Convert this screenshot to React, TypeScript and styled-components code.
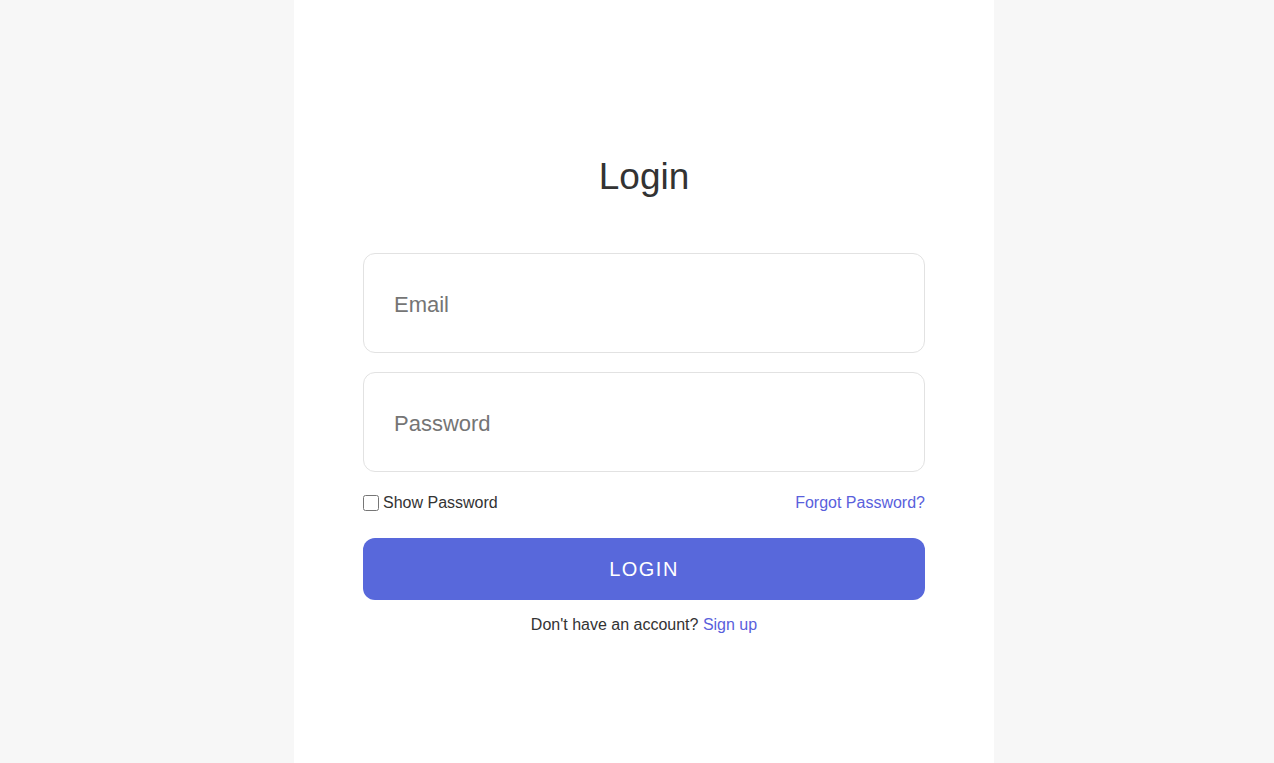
import React, { useState } from "react";
import styled, { createGlobalStyle } from "styled-components";

const GlobalStyle = createGlobalStyle`
  html, body {
    margin: 0;
    padding: 0;
    height: 100%;
    background: #f7f7f7;
    font-family: "Liberation Sans", Arial, sans-serif;
  }
  #root {
    height: 100%;
  }
`;

const Page = styled.div`
  display: flex;
  justify-content: center;
  min-height: 100vh;
  padding-left: 14px;
`;

const Panel = styled.div`
  width: 700px;
  background: #ffffff;
  display: flex;
  flex-direction: column;
  align-items: center;
  padding-top: 154px;
  box-sizing: border-box;
`;

const Title = styled.h1`
  margin: 0 0 53px;
  font-size: 37px;
  font-weight: 400;
  line-height: 46px;
  color: #333333;
`;

const Form = styled.form`
  width: 562px;
  display: flex;
  flex-direction: column;
`;

const Input = styled.input`
  box-sizing: border-box;
  height: 100px;
  width: 100%;
  margin-bottom: 19px;
  padding: 3px 30px 0;
  border: 1px solid #e2e2e2;
  border-radius: 12px;
  font-family: inherit;
  font-size: 22px;
  color: #333333;
  outline: none;

  &::placeholder {
    color: #757575;
  }
`;

const OptionsRow = styled.div`
  display: flex;
  justify-content: space-between;
  align-items: center;
  margin-top: 3px;
  margin-bottom: 26px;
  font-size: 16px;
`;

const CheckLabel = styled.label`
  display: flex;
  align-items: center;
  color: #333333;
  cursor: pointer;

  input {
    margin: 0 4px 0 0;
    width: 16px;
    height: 16px;
  }
`;

const Link = styled.a`
  color: #5a5fdc;
  text-decoration: none;
  cursor: pointer;
`;

const Button = styled.button`
  height: 62px;
  border: none;
  border-radius: 12px;
  background: #5868db;
  color: #ffffff;
  font-family: inherit;
  font-size: 20px;
  letter-spacing: 1.5px;
  cursor: pointer;
`;

const Footer = styled.p`
  margin: 16px 0 0;
  text-align: center;
  font-size: 16px;
  color: #333333;
`;

export default function App() {
  const [show, setShow] = useState(false);
  return (
    <>
      <GlobalStyle />
      <Page>
        <Panel>
          <Title>Login</Title>
          <Form onSubmit={(e) => e.preventDefault()}>
            <Input type="email" placeholder="Email" />
            <Input type={show ? "text" : "password"} placeholder="Password" />
            <OptionsRow>
              <CheckLabel>
                <input
                  type="checkbox"
                  checked={show}
                  onChange={() => setShow(!show)}
                />
                Show Password
              </CheckLabel>
              <Link>Forgot Password?</Link>
            </OptionsRow>
            <Button type="submit">LOGIN</Button>
            <Footer>
              Don't have an account? <Link>Sign up</Link>
            </Footer>
          </Form>
        </Panel>
      </Page>
    </>
  );
}
